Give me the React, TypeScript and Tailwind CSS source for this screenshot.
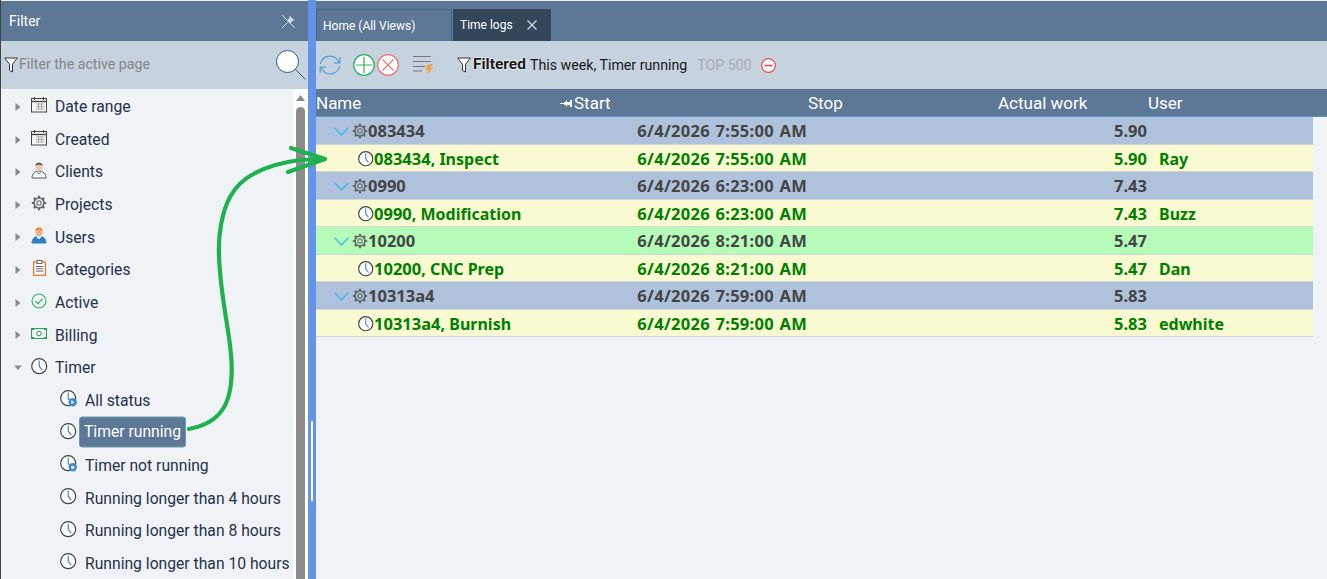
import React from 'react';

const Caret = ({ open }: { open?: boolean }) => (
    <svg width="8" height="10" viewBox="0 0 8 10" className="shrink-0">
        {open ? <path d="M0 2.500h8L4 7z" fill="#8a8a8a" /> : <path d="M1.500 1l5 4-5 4z" fill="#8a8a8a" />}
    </svg>
);

const ClockIcon = ({ size = 17, badge }: { size?: number; badge?: 'play' | 'stop' }) => (
    <svg width={size} height={size} viewBox="0 0 17 17" className="shrink-0">
        <circle cx="8.200" cy="8.200" r="7.500" fill="#fff" stroke="#444" strokeWidth="1.200" />
        <path d="M8.200 2.500V8.200l3 4" fill="none" stroke="#3f8ad0" strokeWidth="1.200" />
        {badge && <circle cx="12.700" cy="12.300" r="4.200" fill="#3f8ad0" />}
        {badge === 'play' && <path d="M11.400 10.300l3 2-3 2z" fill="#fff" />}
        {badge === 'stop' && <circle cx="12.700" cy="12.300" r="1.600" fill="#fff" />}
    </svg>
);

const CalendarIcon = () => (
    <svg width="16" height="16" viewBox="0 0 16 16" className="shrink-0">
        <rect x="0.500" y="1.500" width="15" height="13.500" fill="#f4f6f8" stroke="#444" />
        <path d="M1 4.500h14" stroke="#444" strokeWidth="1.400" />
        <path d="M3.500 0v3M12.500 0v3" stroke="#444" />
        <path d="M5 7h8.500M5 9.500h8.500M5 12h8.500M7.500 6.500v6M10.500 6.500v6" stroke="#a9a9a9" />
    </svg>
);

const PersonIcon = ({ orange }: { orange?: boolean }) => (
    <svg width="16" height="18" viewBox="0 0 16 18" className="shrink-0">
        <path d="M1 17c0-4 3-7 7-7s7 3 7 7z" fill={orange ? '#2f7fc4' : '#fff'} stroke={orange ? '#2f7fc4' : '#555'} />
        <path d="M5.500 10.200L8 13l2.500-2.800" fill={orange ? '#fff' : 'none'} stroke={orange ? '#fff' : '#3f8ad0'} />
        <ellipse cx="8" cy="5.500" rx="3.600" ry="4.300" fill={orange ? '#f5b183' : '#e8c9ae'} />
        <path d="M4.300 5C4.300 .500 11.700 .500 11.700 5 10 3.400 6 3.400 4.300 5z" fill={orange ? '#e8833a' : '#555'} />
    </svg>
);

const GearIcon = ({ size = 16 }: { size?: number }) => (
    <svg width={size} height={size} viewBox="0 0 16 16" className="shrink-0">
        <circle cx="8" cy="8" r="5" fill="none" stroke="#666" strokeWidth="1.600" />
        <circle cx="8" cy="8" r="2.200" fill="none" stroke="#666" strokeWidth="1.100" />
        <path d="M8 .8v2.400M8 12.800v2.400M.8 8h2.400M12.800 8h2.400M2.900 2.900l1.700 1.700M11.400 11.400l1.700 1.700M2.900 13.100l1.700-1.700M11.400 4.600l1.700-1.700" stroke="#666" strokeWidth="2.200" />
    </svg>
);

const ClipboardIcon = () => (
    <svg width="13" height="16" viewBox="0 0 13 16" className="shrink-0">
        <rect x="0.700" y="2" width="11.600" height="13.300" fill="#fff" stroke="#e8762c" strokeWidth="1.300" />
        <rect x="4" y="0.500" width="5" height="3" fill="#fff" stroke="#666" />
        <path d="M3 6.500h7M3 8.800h7M3 11.100h7" stroke="#666" />
    </svg>
);

const CheckIcon = () => (
    <svg width="16" height="16" viewBox="0 0 16 16" className="shrink-0">
        <circle cx="8" cy="8" r="7" fill="none" stroke="#2eb067" strokeWidth="1.100" />
        <path d="M4.500 8.200l2.500 2.500 4.500-5" fill="none" stroke="#2eb067" strokeWidth="1.200" />
    </svg>
);

const BillIcon = () => (
    <svg width="16" height="11" viewBox="0 0 16 11" className="shrink-0">
        <rect x="0.500" y="0.500" width="15" height="10" fill="none" stroke="#2d9d5a" />
        <circle cx="8" cy="5.500" r="2.300" fill="none" stroke="#2d9d5a" />
        <path d="M0 0h3v2H0zM13 0h3v2h-3zM0 9h3v2H0zM13 9h3v2h-3z" fill="#2d9d5a" />
    </svg>
);

const FunnelIcon = ({ size = 14 }: { size?: number }) => (
    <svg width={size} height={size + 2} viewBox="0 0 14 16" className="shrink-0">
        <path d="M.7 1h12.600L8.500 7.200V15l-3-1.500V7.200z" fill="#fff" stroke="#333" strokeWidth="1" />
    </svg>
);

const SearchIcon = () => (
    <svg width="30" height="30" viewBox="0 0 30 30" className="shrink-0">
        <circle cx="11.500" cy="11.500" r="11" fill="#fff" stroke="#1f6079" strokeWidth="1" />
        <path d="M19.500 19.500l10 10" stroke="#1f6079" strokeWidth="1" />
    </svg>
);

const UnpinIcon = () => (
    <svg width="15" height="15" viewBox="0 0 15 15">
        <path d="M1 1l13 13" stroke="#d5dde4" strokeWidth="1" />
        <path d="M1 14L7 8" stroke="#d5dde4" strokeWidth="1" />
        <path d="M8.500 1.500l5 5-2 .500-2.500 2.500-3-3L8.500 4z" fill="#d5dde4" />
    </svg>
);

const RefreshIcon = () => (
    <svg width="22" height="22" viewBox="0 0 22 22" className="shrink-0">
        <path d="M1.500 10a9.500 9.500 0 0 1 17-4l2 2.500M20.500 12a9.500 9.500 0 0 1-17 4l-2-2.500" fill="none" stroke="#4f9bd8" strokeWidth="1.200" />
        <path d="M20.800 3v5.800h-5.800M1.200 19v-5.800H7" fill="none" stroke="#4f9bd8" strokeWidth="1.200" />
    </svg>
);

const CircleButton = ({ color, children }: { color: string; children: React.ReactNode }) => (
    <svg width="22" height="22" viewBox="0 0 22 22" className="shrink-0">
        <circle cx="11" cy="11" r="10.300" fill="#fff" stroke={color} strokeWidth="1.300" />
        {children}
    </svg>
);

const PinSmall = () => (
    <svg width="12" height="9" viewBox="0 0 12 9" className="shrink-0">
        <path d="M0 4h4v1H0zM4 3h2V1.500h1V3h3V1h2v7h-2V6H7v1.500H6V6H4z" fill="#fff" />
    </svg>
);

const BoltListIcon = () => (
    <svg width="23" height="22" viewBox="0 0 23 22" className="shrink-0">
        <path d="M1 2.500h18M1 7.500h18M1 12.500h12M1 17h9" stroke="#777" strokeWidth="1.200" />
        <path d="M21.500 9.500l-6 1.500-2 5 3-.500-2 6 6.500-8-3 .500z" fill="#f0a040" />
    </svg>
);

const filterItems = [
    { label: 'Date range', icon: <CalendarIcon /> },
    { label: 'Created', icon: <CalendarIcon /> },
    { label: 'Clients', icon: <PersonIcon /> },
    { label: 'Projects', icon: <GearIcon /> },
    { label: 'Users', icon: <PersonIcon orange /> },
    { label: 'Categories', icon: <ClipboardIcon /> },
    { label: 'Active', icon: <CheckIcon /> },
    { label: 'Billing', icon: <BillIcon /> },
];

const timerItems = [
    { label: 'All status', badge: 'play' as const },
    { label: 'Timer running', selected: true },
    { label: 'Timer not running', badge: 'stop' as const },
    { label: 'Running longer than 4 hours' },
    { label: 'Running longer than 8 hours' },
    { label: 'Running longer than 10 hours' },
];

const groups = [
    { code: '083434', date: '6/4/2026 7:55:00 AM', hours: '5.90', task: 'Inspect', user: 'Ray', bg: 'bg-[#aec2dc]' },
    { code: '0990', date: '6/4/2026 6:23:00 AM', hours: '7.43', task: 'Modification', user: 'Buzz', bg: 'bg-[#aec2dc]' },
    { code: '10200', date: '6/4/2026 8:21:00 AM', hours: '5.47', task: 'CNC Prep', user: 'Dan', bg: 'bg-[#b5fcb9]' },
    { code: '10313a4', date: '6/4/2026 7:59:00 AM', hours: '5.83', task: 'Burnish', user: 'edwhite', bg: 'bg-[#aec2dc]' },
];

const rowGrid = 'grid grid-cols-[257px_234px_190px_150px_150px_16px] h-[27.5px] items-center border-b border-[#d2d6da] pt-[2px] text-[16px] font-bold leading-none';

const App = () => {
    return (
        <div className="relative flex h-[579px] w-[1327px] overflow-hidden bg-[#eff3f6] font-['Roboto',sans-serif]">
            {/* panneau filtre */}
            <div className="flex w-[308px] shrink-0 flex-col border-l border-[#444]">
                <div className="mt-px flex h-[40px] items-center justify-between bg-[#5c7896] pl-2 pr-[12px] text-[14px] text-white">
                    <span>Filter</span>
                    <UnpinIcon />
                </div>
                <div className="flex h-[48px] items-center bg-[#c6d3de] pl-[3px] pr-[2px]">
                    <FunnelIcon />
                    <span className="ml-px flex-1 text-[14.200px] text-[#858585]">Filter the active page</span>
                    <SearchIcon />
                </div>
                <div className="flex min-h-0 flex-1">
                    <div className="min-w-0 flex-1 pt-[1.600px] text-[15.700px] leading-none text-[#25324a]">
                        {filterItems.map((item) => (
                            <div key={item.label} className="flex h-[32.650px] items-center">
                                <div className="ml-[13px] mr-[9px]"><Caret /></div>
                                <div className="flex w-[16px] -translate-y-[2px] justify-center">{item.icon}</div>
                                <span className="ml-[8px]">{item.label}</span>
                            </div>
                        ))}
                        <div className="flex h-[32.650px] items-center">
                            <div className="ml-[13px] mr-[9px]"><Caret open /></div>
                            <div className="-translate-y-[2px]"><ClockIcon /></div>
                            <span className="ml-[7px]">Timer</span>
                        </div>
                        {timerItems.map((item) => (
                            <div key={item.label} className="flex h-[32.650px] items-center pl-[59px]">
                                <div className="-translate-y-[2px]"><ClockIcon badge={item.badge} /></div>
                                <span className={item.selected
                                    ? 'ml-[2px] -translate-y-[1.500px] rounded-[3px] border border-[#6c9bb0] bg-[#5c7896] px-[4px] py-[6.500px] text-white'
                                    : 'ml-[8px] whitespace-nowrap'}>
                                    {item.label}
                                </span>
                            </div>
                        ))}
                    </div>
                    {/* barre de défilement */}
                    <div className="flex w-[15px] shrink-0 flex-col items-start bg-white pl-[3px]">
                        <svg width="9" height="8" viewBox="0 0 9 8" className="mt-[5px] shrink-0"><path d="M0 7l4.500-6 4.500 6z" fill="#8c8c8c" /></svg>
                        <div className="mt-[5px] w-[9px] flex-1 rounded-t-[5px] bg-[#8c8c8c]" />
                    </div>
                </div>
            </div>

            {/* séparateur */}
            <div className="flex w-[8px] shrink-0 items-end bg-[#6394e8] pb-[78px] pl-[3px]">
                <div className="h-[80px] w-[2px] bg-white" />
            </div>

            {/* contenu */}
            <div className="flex min-w-0 flex-1 flex-col">
                <div className="mt-px flex h-[40px] items-end gap-px bg-[#5c7896] text-[12px] text-white">
                    <div className="flex h-[32px] w-[136px] items-center border border-b-0 border-[#486684] pl-[6px]">Home (All Views)</div>
                    <div className="flex h-[32px] w-[98px] items-center justify-between bg-[#33475b] pl-[7px] pr-[14px]">
                        <span>Time logs</span>
                        <svg width="10" height="10" viewBox="0 0 10 10"><path d="M.5.500l9 9M9.500.500l-9 9" stroke="#d5dde4" strokeWidth="1.200" /></svg>
                    </div>
                </div>
                <div className="flex h-[48px] items-center bg-[#c6d3de] pl-[3px] text-[14.200px] leading-none">
                    <RefreshIcon />
                    <div className="ml-[12px] flex gap-[2px]">
                        <CircleButton color="#2eb067"><path d="M11 3v16M3 11h16" stroke="#2eb067" strokeWidth="1.200" /></CircleButton>
                        <CircleButton color="#ef7474"><path d="M5.500 5.500l11 11M16.500 5.500l-11 11" stroke="#ef7474" strokeWidth="1.200" /></CircleButton>
                    </div>
                    <div className="ml-[13px]"><BoltListIcon /></div>
                    <div className="ml-[22px]"><FunnelIcon /></div>
                    <span className="ml-[2px] text-[15.500px] font-bold text-[#1a1a1a] [text-shadow:0_0_2px_#fff,0_0_2px_#fff]">Filtered</span>
                    <span className="ml-[4px] text-[#1a1a1a]">This week, Timer running</span>
                    <span className="ml-[10px] text-[#a8acb0]">TOP 500</span>
                    <svg width="15" height="15" viewBox="0 0 15 15" className="ml-[9px]">
                        <circle cx="7.500" cy="7.500" r="6.800" fill="#fff" stroke="#ec4b4b" strokeWidth="1.200" />
                        <path d="M3.500 7.500h8" stroke="#ec4b4b" strokeWidth="1.600" />
                    </svg>
                </div>
                <div className="grid h-[28px] grid-cols-[257px_234px_190px_150px_150px_16px] items-center border-b border-[#5b96c8] bg-[#5c7896] pt-[2px] text-[17px] leading-none text-white">
                    <span>Name</span>
                    <span className="relative pl-px">
                        <span className="absolute left-[-13px] top-[4px]"><PinSmall /></span>
                        Start
                    </span>
                    <span className="pl-px">Stop</span>
                    <span className="pl-px">Actual work</span>
                    <span className="pl-px">User</span>
                    <span />
                </div>
                <div className="w-[997px] font-['Noto_Sans',sans-serif]">
                    {groups.map((g) => (
                        <div key={g.code}>
                            <div className={`${rowGrid} ${g.bg} text-[#454545]`}>
                                <div className="flex items-center pl-[18px]">
                                    <svg width="15" height="9" viewBox="0 0 15 9" fill="none" className="shrink-0">
                                        <path d="M.7.700L7.500 8 14.300.700" stroke="#45b4ee" strokeWidth="1.300" />
                                    </svg>
                                    <div className="ml-[3px]"><GearIcon /></div>
                                    <span className="text-[16.500px]">{g.code}</span>
                                </div>
                                <span className="text-right text-[16.500px] tracking-[0.3px] [word-spacing:0.800px]">{g.date}</span>
                                <span />
                                <span className="text-right text-[16.500px]">{g.hours}</span>
                                <span />
                                <span />
                            </div>
                            <div className={`${rowGrid} bg-[#f9fad2] text-[#008000]`}>
                                <div className="flex items-center whitespace-pre pl-[42px]">
                                    <ClockIcon size={16} />
                                    <span><span className="text-[16.500px]">{g.code}</span>, {g.task}</span>
                                </div>
                                <span className="text-right text-[16.500px] tracking-[0.3px] [word-spacing:0.800px]">{g.date}</span>
                                <span />
                                <span className="text-right text-[16.500px]">{g.hours}</span>
                                <span className="pl-[12px]">{g.user}</span>
                                <span />
                            </div>
                        </div>
                    ))}
                </div>
            </div>

            {/* flèche verte annotée par-dessus la capture */}
            <svg width="1327" height="579" viewBox="0 0 1327 579" fill="none" className="pointer-events-none absolute left-0 top-0">
                <path d="M189 429C205 426 222 418 228 398C233 382 232 360 230 345C227 320 220 290 219 255C218 235 222 212 230 197C240 178 262 165 300 160L322 159" stroke="#1fb14e" strokeWidth="4.200" strokeLinecap="round" />
                <path d="M291 148L325 159L288 172" stroke="#1fb14e" strokeWidth="4.200" strokeLinecap="round" strokeLinejoin="round" />
            </svg>
        </div>
    );
};

export default App;
